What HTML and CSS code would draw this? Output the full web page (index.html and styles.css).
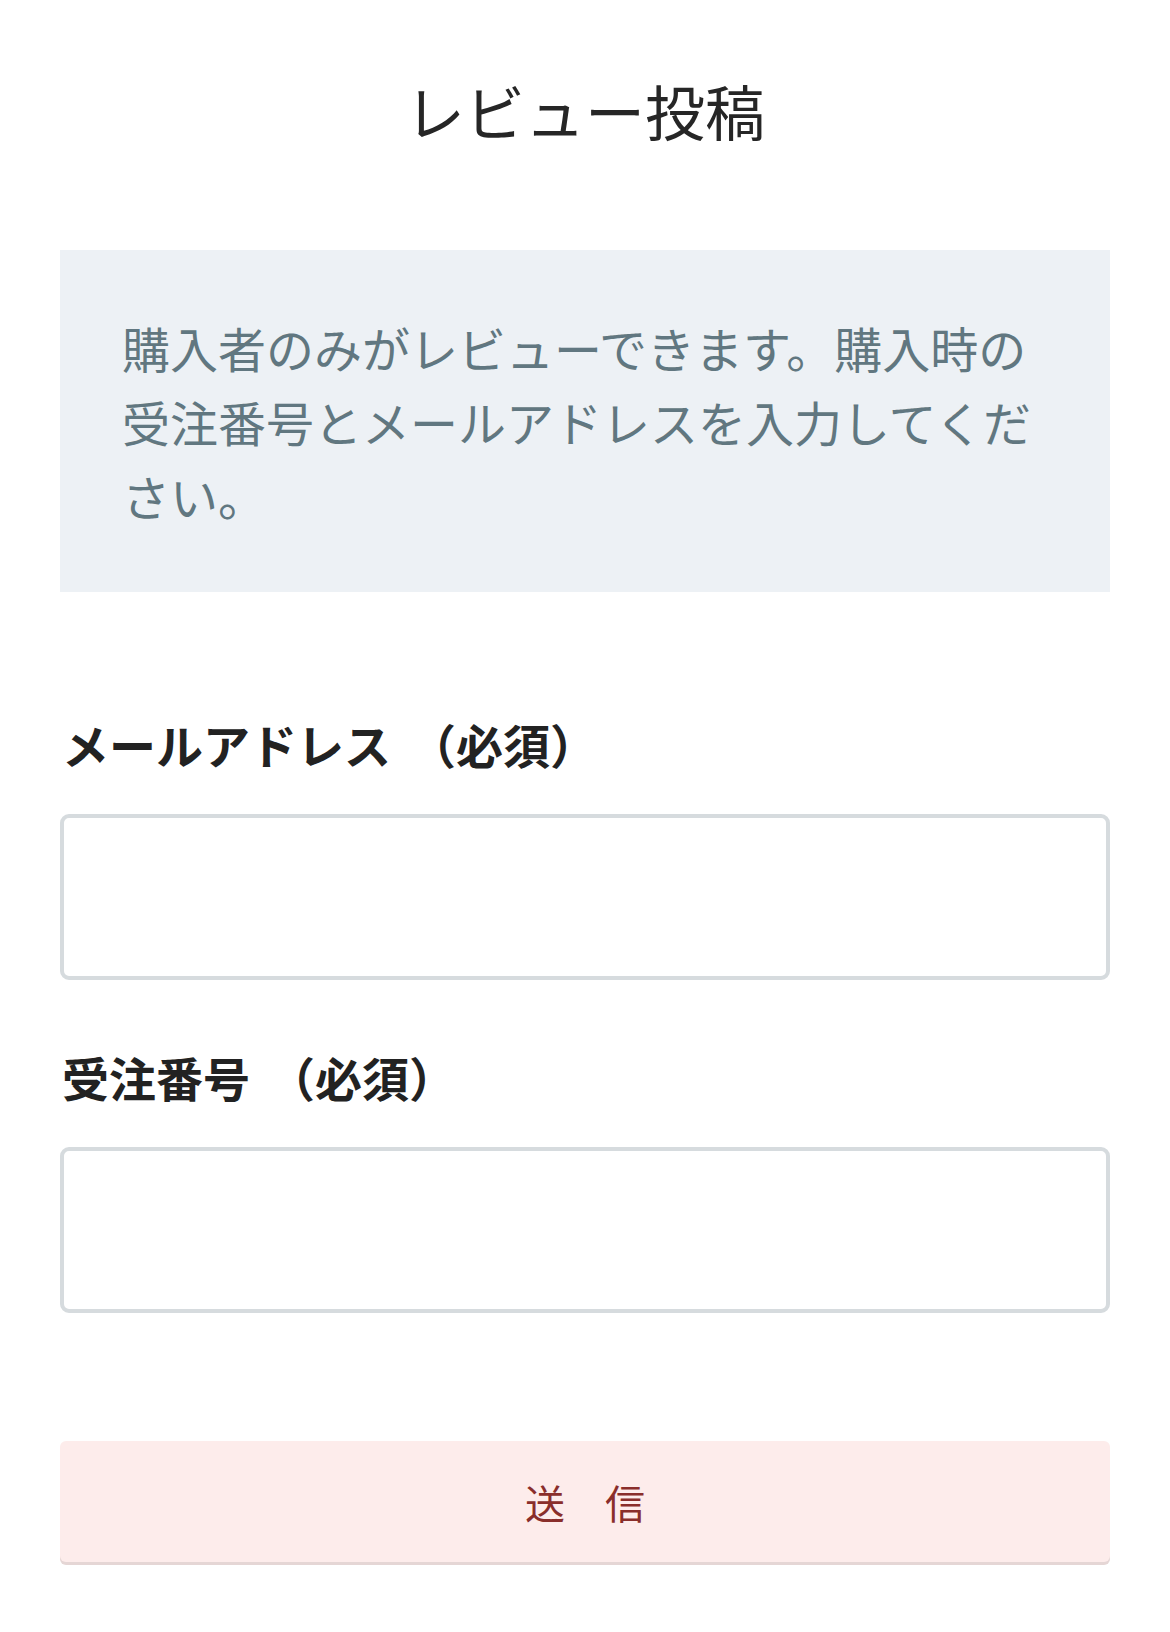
FILE: index.html
```html
<!DOCTYPE html>
<html lang="ja">
<head>
<meta charset="utf-8">
<title>レビュー投稿</title>
<link rel="stylesheet" href="styles.css">
</head>
<body>
<main class="page">
  <h1 class="title">レビュー投稿</h1>
  <div class="notice">購入者のみがレビューできます。購入時の受注番号とメールアドレスを入力してください。</div>
  <form class="form">
    <label class="label label-first" for="email">メールアドレス<span class="req">（必須）</span></label>
    <input class="field" id="email" type="email">
    <label class="label label-second" for="order">受注番号<span class="req">（必須）</span></label>
    <input class="field" id="order" type="text">
    <button class="submit" type="button">送　信</button>
  </form>
</main>
</body>
</html>
```

FILE: styles.css
```css
html, body {
  margin: 0;
  padding: 0;
  background: #ffffff;
}

body {
  font-family: "Noto Sans CJK JP", "Noto Sans", sans-serif;
  color: #222222;
}

.page {
  padding: 69px 60px 60px;
  display: flex;
  flex-direction: column;
}

.title {
  margin: 0;
  font-size: 60px;
  line-height: 82px;
  font-weight: 400;
  text-align: center;
  color: #262626;
}

.notice {
  margin-top: 99px;
  background: #edf1f5;
  padding: 60px 62px;
  font-size: 48px;
  line-height: 74px;
  color: #617780;
  font-weight: 400;
}

.form {
  display: flex;
  flex-direction: column;
}

.label {
  font-size: 47px;
  line-height: 60px;
  font-weight: 700;
  color: #222222;
  padding-left: 2px;
}

.label-first {
  margin-top: 122px;
}

.label-second {
  margin-top: 67px;
}

.req {
  margin-left: 18px;
}

.field {
  margin-top: 40px;
  height: 166px;
  box-sizing: border-box;
  border: 4px solid #d6dbde;
  border-radius: 9px;
  background: #ffffff;
  font-size: 40px;
  padding: 0 20px;
  outline: none;
}

.submit {
  margin-top: 128px;
  height: 121px;
  border: none;
  border-radius: 6px;
  background: #fdeceb;
  box-shadow: 0 3px 0 #e5d6d5;
  color: #8a2e2b;
  font-family: "Noto Sans CJK JP", "Noto Sans", sans-serif;
  font-size: 40px;
  font-weight: 400;
  cursor: pointer;
}
```
